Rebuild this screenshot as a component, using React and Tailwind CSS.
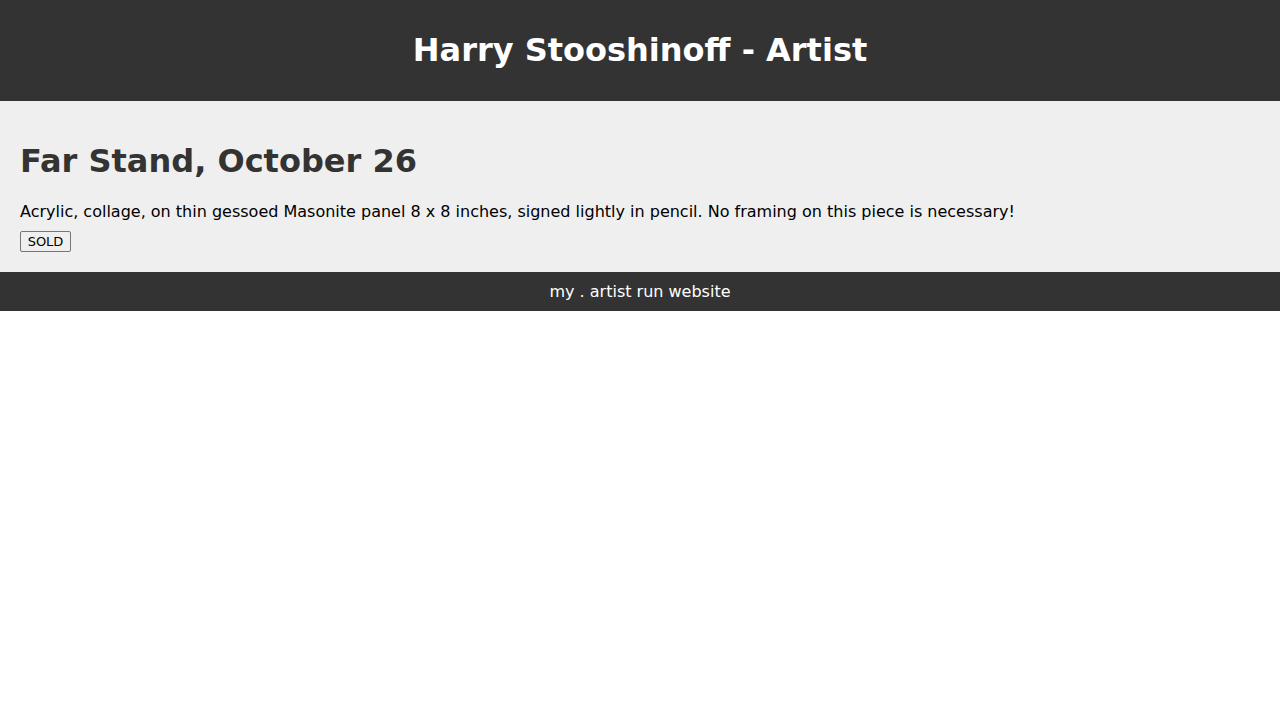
export default function App() {
  return (
    <div className="min-h-[720px] bg-white" style={{ fontFamily: '"DejaVu Sans", sans-serif' }}>
      <header className="bg-[#333333] h-[101px] flex items-center justify-center">
        <h1 className="text-[32px] font-bold text-white leading-[37px]">Harry Stooshinoff - Artist</h1>
      </header>
      <main className="bg-[#efefef] px-5 pt-[42px] pb-5">
        <h2 className="text-[32px] font-bold text-[#333333] leading-[37px]">Far Stand, October 26</h2>
        <p className="mt-[22px] text-base leading-[19px] text-black">
          Acrylic, collage, on thin gessoed Masonite panel 8 x 8 inches, signed lightly in pencil. No framing on this piece is necessary!
        </p>
        <button className="mt-[10px] h-[21px] w-[51px] border border-[#767676] rounded-[2px] bg-[#efefef] text-[13px] leading-[15px] text-black flex items-center justify-center">
          SOLD
        </button>
      </main>
      <footer className="bg-[#333333] h-[39px] flex items-center justify-center text-base text-white">
        my . artist run website
      </footer>
    </div>
  );
}
